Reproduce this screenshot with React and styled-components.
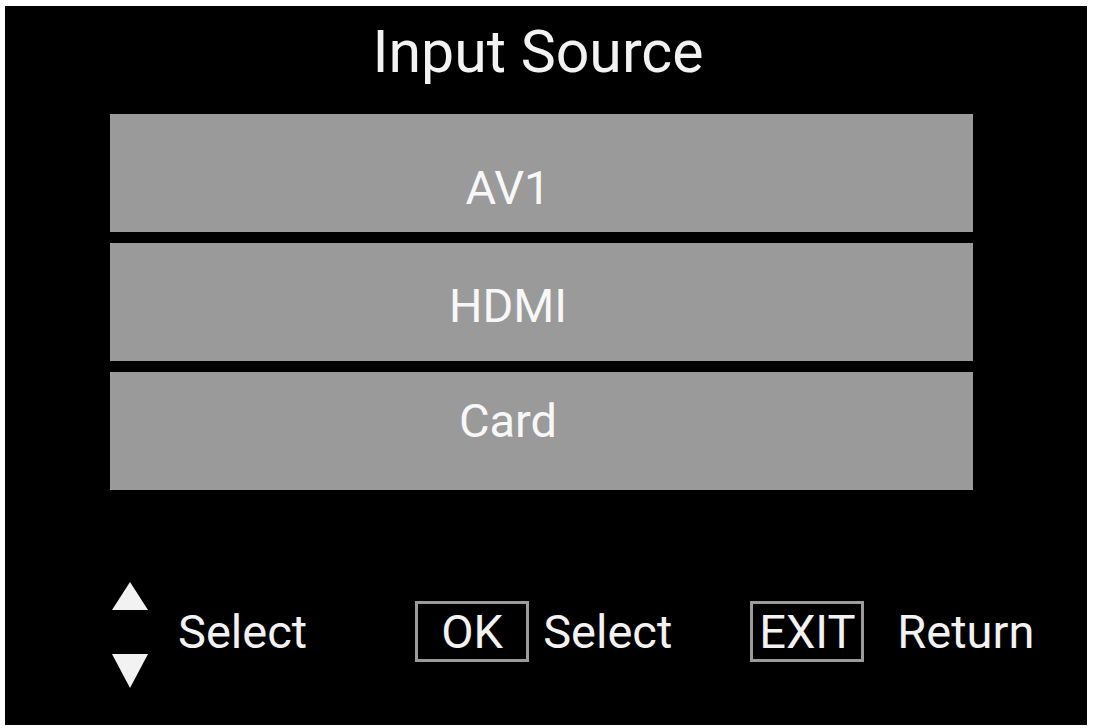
import React from "react";
import styled, { createGlobalStyle } from "styled-components";

const sources = [
  { name: "AV1", top: 50 },
  { name: "HDMI", top: 39 },
  { name: "Card", top: 25 },
];

function ArrowUp() {
  return (
    <svg width="36" height="28" viewBox="0 0 36 28">
      <polygon points="18,0 36,28 0,28" fill="#f2f2f2" />
    </svg>
  );
}

function ArrowDown() {
  return (
    <svg width="36" height="34" viewBox="0 0 36 34">
      <polygon points="0,0 36,0 18,34" fill="#f2f2f2" />
    </svg>
  );
}

function App() {
  return (
    <>
      <GlobalStyle />
      <Panel>
        <Title>Input Source</Title>
        <SourceList>
          {sources.map((s) => (
            <SourceItem key={s.name} $top={s.top}>
              {s.name}
            </SourceItem>
          ))}
        </SourceList>
        <Footer>
          <Arrows>
            <ArrowUp />
            <ArrowDown />
          </Arrows>
          <Label $gap={30}>Select</Label>
          <Key $gap={108}>OK</Key>
          <Label $gap={14}>Select</Label>
          <Key $gap={78}>EXIT</Key>
          <Label $gap={33}>Return</Label>
        </Footer>
      </Panel>
    </>
  );
}

const GlobalStyle = createGlobalStyle`
  html, body {
    margin: 0;
    padding: 0;
    background: #ffffff;
  }
  body {
    font-family: Roboto, "Liberation Sans", sans-serif;
  }
`;

const Panel = styled.div`
  margin: 6px 0 0 5px;
  width: 1082px;
  height: 719px;
  box-sizing: border-box;
  padding-top: 11px;
  background: #000000;
  display: flex;
  flex-direction: column;
  color: #f2f2f2;
`;

const Title = styled.h1`
  margin: 0;
  padding-right: 16px;
  height: 70px;
  font-size: 59px;
  font-weight: 400;
  line-height: 70px;
  text-align: center;
`;

const SourceList = styled.div`
  margin: 27px 0 0 105px;
  width: 863px;
  display: flex;
  flex-direction: column;
  gap: 11px;
`;

const SourceItem = styled.div`
  height: 118px;
  box-sizing: border-box;
  padding: ${(p) => p.$top}px 67px 0 0;
  background: #9a9a9a;
  color: #f7f7f7;
  font-size: 47px;
  line-height: 1;
  text-align: center;
`;

const Footer = styled.div`
  margin-top: 92px;
  padding-left: 107px;
  height: 98px;
  display: flex;
  align-items: center;
`;

const Arrows = styled.div`
  margin-top: 8px;
  width: 36px;
  display: flex;
  flex-direction: column;
  justify-content: space-between;
  height: 106px;
`;

const Label = styled.span`
  margin-left: ${(p) => p.$gap}px;
  font-size: 47px;
  line-height: 1;
`;

const Key = styled.span`
  margin-left: ${(p) => p.$gap}px;
  width: 114px;
  height: 61px;
  box-sizing: border-box;
  border: 3px solid #9b9b9b;
  display: flex;
  align-items: center;
  justify-content: center;
  font-size: 47px;
  line-height: 1;
`;

export default App;
